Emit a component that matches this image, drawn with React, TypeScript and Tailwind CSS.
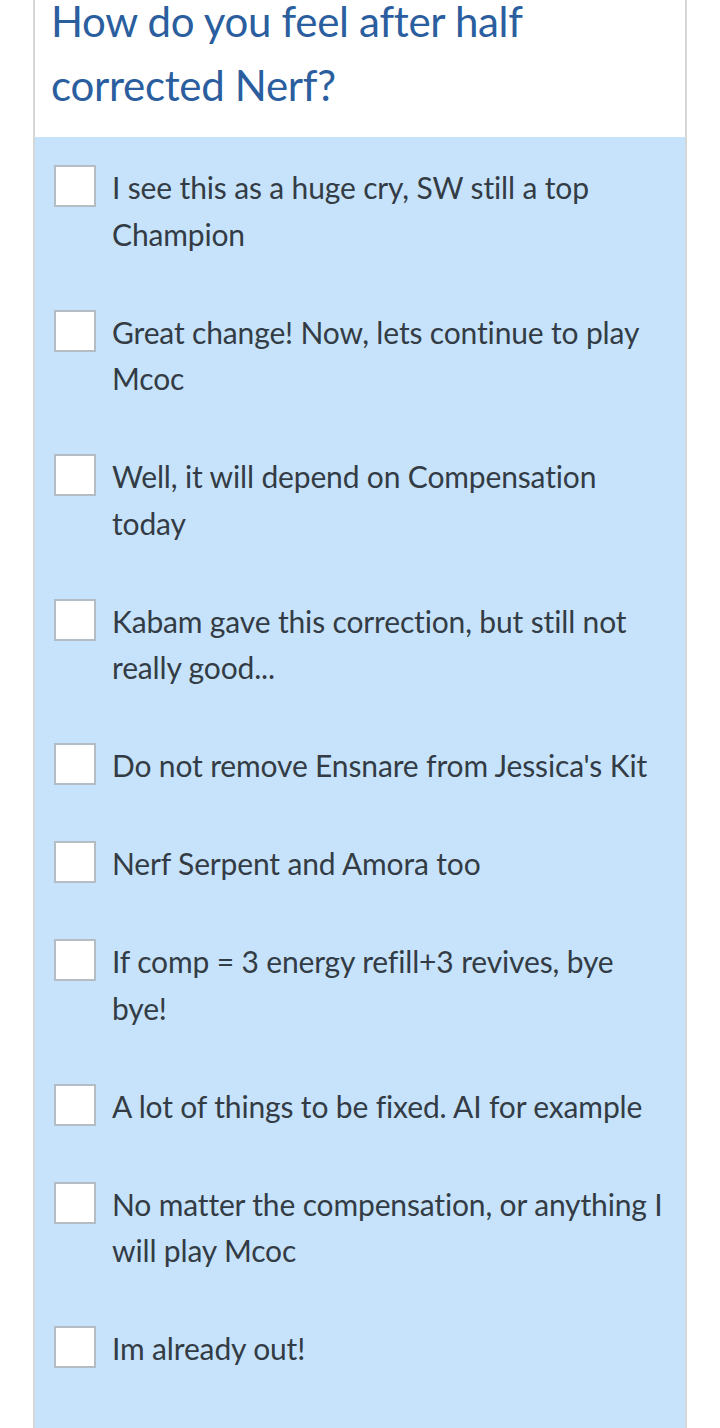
import React from "react";

const options: string[][] = [
  ["I see this as a huge cry, SW still a top", "Champion"],
  ["Great change! Now, lets continue to play", "Mcoc"],
  ["Well, it will depend on Compensation", "today"],
  ["Kabam gave this correction, but still not", "really good..."],
  ["Do not remove Ensnare from Jessica's Kit"],
  ["Nerf Serpent and Amora too"],
  ["If comp = 3 energy refill+3 revives, bye", "bye!"],
  ["A lot of things to be fixed. AI for example"],
  ["No matter the compensation, or anything I", "will play Mcoc"],
  ["Im already out!"],
];

function PollOption({ lines }: { lines: string[] }) {
  return (
    <label className="flex items-start gap-4">
      <span className="mt-[1px] h-[42px] w-[42px] shrink-0 border-2 border-[#b4bcc4] bg-white" />
      <span className="flex flex-col text-[30px] leading-[46.5px] text-[#333c45] tracking-[-0.15px]">
        {lines.map((l) => (
          <span key={l} className="whitespace-nowrap">
            {l}
          </span>
        ))}
      </span>
    </label>
  );
}

export default function App() {
  return (
    <div className="h-[1428px] overflow-hidden bg-white font-['Lato',sans-serif]">
      <div className="mx-[33px] flex h-full flex-col border-x-2 border-[#d6d6d6]">
        {/* Question header */}
        <div className="h-[137px] shrink-0 overflow-hidden bg-white pl-[16px]">
          <h2 className="-mt-[11px] text-[42px] leading-[64px] text-[#2a5e9e] tracking-[-0.3px]">
            How do you feel after half
            <br />
            corrected Nerf?
          </h2>
        </div>

        {/* Options */}
        <div className="flex flex-1 flex-col gap-[51.5px] bg-[#c7e3fb] pl-[19px] pt-[27px]">
          {options.map((o) => (
            <PollOption key={o[0]} lines={o} />
          ))}
        </div>
      </div>
    </div>
  );
}
